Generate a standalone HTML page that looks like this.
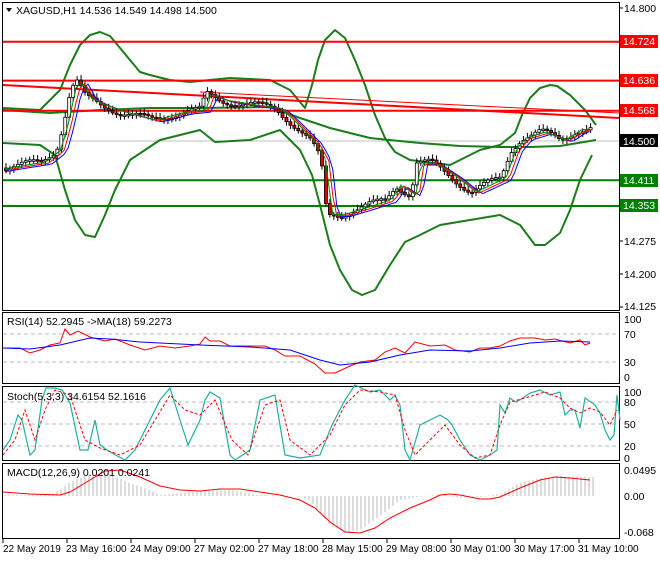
<!DOCTYPE html>
<html><head><meta charset="utf-8"><style>
body{margin:0;background:#fff;width:660px;height:560px;overflow:hidden;font-family:"Liberation Sans",sans-serif}
svg text{font-family:"Liberation Sans",sans-serif;font-size:10.5px;fill:#000}
svg text.b{font-size:10px}
</style></head><body>
<svg id="s" width="660" height="560" xmlns="http://www.w3.org/2000/svg">
<rect width="660" height="560" fill="#fff"/>
<g fill="none" stroke="#000" stroke-width="1">
<rect x="2.5" y="2.5" width="617" height="308"/>
<rect x="2.5" y="312.5" width="617" height="71"/>
<rect x="2.5" y="386.5" width="617" height="74"/>
<rect x="2.5" y="463.5" width="617" height="75"/>
</g>
<g stroke="#bbb" stroke-dasharray="4,3">
<line x1="3" x2="619" y1="334" y2="334"/><line x1="3" x2="619" y1="362" y2="362"/>
<line x1="3" x2="619" y1="402" y2="402"/><line x1="3" x2="619" y1="424" y2="424"/><line x1="3" x2="619" y1="446" y2="446"/>
</g>
<line x1="3" x2="619" y1="141" y2="141" stroke="#c0c0c0"/>
<g fill="none" stroke="#1a7d1a" stroke-width="2" stroke-linejoin="round">
<polyline points="3,108 40,110 60,90 70,65 80,45 90,35 100,32 110,36 120,48 130,60 140,72 150,75 170,80 190,82 210,80 230,78 270,80 290,90 305,108 312,85 318,60 325,40 335,30 345,38 355,60 365,85 375,115 385,138 395,152 410,160 450,165 480,150 500,145 515,133 522,115 530,98 540,88 550,85 557,86 570,95 585,110 596,125"/>
<polyline points="3,110 50,113 100,110 150,108 200,108 270,107 300,118 330,128 370,138 420,143 460,146 500,147 530,147 560,146 596,140"/>
<polyline points="3,143 40,145 55,155 65,190 75,220 85,235 95,237 105,215 115,190 130,160 160,140 200,130 215,142 250,140 280,130 300,150 312,175 320,205 330,245 340,270 352,290 362,295 375,290 390,265 405,242 420,235 440,225 470,220 500,215 520,225 535,245 545,245 560,233 570,210 580,180 592,155"/>
</g>
<g stroke="#f00" stroke-width="2">
<line x1="3" x2="619" y1="41.7" y2="41.7"/><line x1="3" x2="619" y1="80.6" y2="80.6"/><line x1="3" x2="619" y1="110.8" y2="110.8"/>
<line x1="3" x2="619" y1="85" y2="118"/><line x1="200" x2="619" y1="92" y2="113" stroke-width="1"/>
</g>
<g stroke="#008000" stroke-width="2">
<line x1="3" x2="619" y1="180.3" y2="180.3"/><line x1="3" x2="619" y1="206" y2="206"/>
</g>
<g id="candles"></g>
<g fill="none" stroke-width="1">
<polyline id="ma1" stroke="#00f"/><polyline id="ma2" stroke="#f00"/><polyline id="ma3" stroke="#080"/>
</g>
<polyline fill="none" stroke="#f00" points="3,348 20,348 30,353 40,350 50,345 60,343 65,329 70,335 78,331 90,337 105,341 115,339 130,345 145,350 160,346 175,348 190,346 200,344 205,337 210,341 220,341 230,346 250,346 265,346 275,350 285,356 300,356 315,364 325,373 335,373 350,366 360,362 375,360 385,352 395,348 405,353 415,342 430,346 445,345 455,350 470,352 480,348 490,348 500,346 510,341 520,338 535,338 545,340 555,339 570,343 580,340 585,345 590,343"/>
<polyline fill="none" stroke="#00f" points="3,348 30,349 60,345 90,338 110,339 140,342 200,345 250,347 290,350 320,360 340,365 370,362 400,355 430,350 470,351 500,348 530,343 560,341 590,342"/>
<polyline fill="none" stroke="#20b0a0" stroke-width="1.2" points="3,450 10,440 18,415 22,420 30,455 35,450 42,400 46,388 55,388 62,390 70,403 80,450 88,450 95,420 100,445 110,452 125,460 135,450 150,420 160,400 170,388 180,420 188,445 200,420 205,400 210,392 220,398 230,455 235,460 250,450 260,400 275,395 285,455 300,458 320,455 332,425 345,400 355,385 370,392 380,390 390,400 395,395 400,405 405,450 410,460 420,425 430,420 440,415 448,420 452,425 460,440 470,455 480,460 490,455 497,450 500,405 505,413 510,398 515,402 520,400 530,393 540,390 550,395 560,392 565,415 570,410 575,410 580,428 585,398 595,405 600,413 605,430 610,440 614,435 617,395 620,420"/>
<polyline fill="none" stroke="#f00" stroke-dasharray="3,2" points="3,455 15,440 25,410 35,440 45,410 55,390 70,395 85,440 100,448 120,455 140,445 155,420 170,395 185,410 200,415 215,400 232,440 248,455 265,405 280,400 290,440 310,455 330,435 345,405 360,390 380,392 395,395 405,430 415,455 430,440 445,425 460,445 475,458 490,455 500,425 510,402 525,398 545,392 560,398 570,408 580,413 590,408 600,412 610,425 617,410"/>
<g id="hist" stroke="#bbb"></g>
<polyline fill="none" stroke="#f00" points="3,492 30,494 60,495 70,492 90,480 105,471 120,470 140,477 160,486 180,490 200,491 220,489 240,489 260,492 280,495 300,500 315,508 330,522 345,532 360,533 375,528 390,518 410,508 430,500 440,495 450,494 460,495 470,497 480,499 490,499 500,497 520,488 540,480 555,477 570,478 590,480"/>
<path d="M6,8 L12,8 L9,12 Z" fill="#000"/>
<text x="16" y="14">XAGUSD,H1  14.536 14.549 14.498 14.500</text>
<text x="7" y="325">RSI(14) 52.2945  -&gt;MA(18) 59.2273</text>
<text x="7" y="400">Stoch(5,3,3) 34.6154 52.1616</text>
<text x="7" y="476">MACD(12,26,9) 0.0201 0.0241</text>
<g stroke="#000"><line x1="619" x2="623" y1="8" y2="8"/><line x1="619" x2="623" y1="241" y2="241"/><line x1="619" x2="623" y1="274" y2="274"/><line x1="619" x2="623" y1="307" y2="307"/></g>
<text x="624" y="12">14.800</text>
<text x="624" y="245">14.275</text>
<text x="624" y="278">14.200</text>
<text x="624" y="310">14.125</text>
<rect x="620" y="35" width="38" height="13" fill="#f00"/><text x="623" y="45" style="fill:#fff">14.724</text>
<rect x="620" y="74" width="38" height="13" fill="#f00"/><text x="623" y="84" style="fill:#fff">14.636</text>
<rect x="620" y="104" width="38" height="13" fill="#f00"/><text x="623" y="114" style="fill:#fff">14.568</text>
<rect x="620" y="134" width="38" height="13" fill="#000"/><text x="623" y="145" style="fill:#fff">14.500</text>
<rect x="620" y="174" width="38" height="13" fill="#008000"/><text x="623" y="184" style="fill:#fff">14.411</text>
<rect x="620" y="199" width="38" height="13" fill="#008000"/><text x="623" y="209" style="fill:#fff">14.353</text>
<text x="624" y="323">100</text><text x="624" y="338">70</text><text x="624" y="366">30</text><text x="624" y="381">0</text>
<text x="624" y="396">100</text><text x="624" y="406">80</text><text x="624" y="428">50</text><text x="624" y="450">20</text><text x="624" y="462">0</text>
<text x="624" y="474">0.0495</text><text x="624" y="500">0.00</text><text x="624" y="536">-0.068</text>
<g id="ticks" stroke="#000"></g>
<text class="b" x="3" y="552">22 May 2019</text><text class="b" x="66" y="552">23 May 16:00</text><text class="b" x="130" y="552">24 May 09:00</text>
<text class="b" x="194" y="552">27 May 02:00</text><text class="b" x="258" y="552">27 May 18:00</text><text class="b" x="322" y="552">28 May 15:00</text>
<text class="b" x="386" y="552">29 May 08:00</text><text class="b" x="450" y="552">30 May 01:00</text><text class="b" x="514" y="552">30 May 17:00</text>
<text class="b" x="578" y="552">31 May 10:00</text>
</svg>
<script>
(function(){
var NS="http://www.w3.org/2000/svg";
function el(t,a,p){var e=document.createElementNS(NS,t);for(var k in a)e.setAttribute(k,a[k]);p.appendChild(e);return e;}
var P=[[3,168],[40,162],[55,150],[62,125],[70,88],[76,82],[85,98],[100,105],[120,112],[150,120],[180,112],[200,110],[205,94],[220,100],[250,105],[275,108],[290,122],[310,142],[320,160],[326,215],[340,214],[360,208],[385,200],[395,185],[410,195],[415,163],[430,163],[450,176],[470,192],[485,185],[500,178],[510,150],[520,138],[540,132],[560,140],[575,130],[592,128]];
function f(x){for(var i=0;i<P.length-1;i++){if(x<=P[i+1][0]){var t=(x-P[i][0])/(P[i+1][0]-P[i][0]);return P[i][1]+t*(P[i+1][1]-P[i][1]);}}return P[P.length-1][1];}
var g=document.getElementById("candles"),prev=f(3),m1=[],m2=[],m3=[];
for(var x=5;x<=593;x+=3.95){var y=f(x)+Math.sin(x*1.7)*4,o=prev,c=y;var tp=Math.min(o,c),h=Math.max(Math.abs(o-c),1.5);
el("line",{x1:x+1,x2:x+1,y1:tp-2-Math.abs(Math.sin(x))*3,y2:tp+h+2+Math.abs(Math.cos(x))*2,stroke:"#000"},g);
el("rect",{x:x-0.5,y:tp,width:3,height:h,fill:c>o?"#d00":"#fff",stroke:"#000","stroke-width":0.8},g);prev=c;
m1.push(x+","+(f(x-12)+2));m2.push(x+","+(f(x-9)+1));m3.push(x+","+f(x-6));}
document.getElementById("ma1").setAttribute("points",m1.join(" "));
document.getElementById("ma2").setAttribute("points",m2.join(" "));
document.getElementById("ma3").setAttribute("points",m3.join(" "));
var R=[[3,495],[50,495],[60,490],[70,482],[90,474],[110,474],[130,483],[150,490],[160,495],[200,491],[230,490],[260,495],[300,496],[310,500],[330,525],[345,533],[360,530],[380,516],[400,500],[420,497],[440,494],[460,498],[480,497],[500,494],[520,483],[540,478],[560,476],[590,477]];
function r(x){for(var i=0;i<R.length-1;i++){if(x<=R[i+1][0]){var t=(x-R[i][0])/(R[i+1][0]-R[i][0]);return R[i][1]+t*(R[i+1][1]-R[i][1]);}}return 477;}
var hg=document.getElementById("hist");
for(var x=5;x<=593;x+=4)el("line",{x1:x,x2:x,y1:496,y2:r(x)},hg);
var tg=document.getElementById("ticks");
[3,67,131,195,259,323,387,451,515,579].forEach(function(x){el("line",{x1:x,x2:x,y1:539,y2:543},tg);});
})();
</script>
</body></html>
